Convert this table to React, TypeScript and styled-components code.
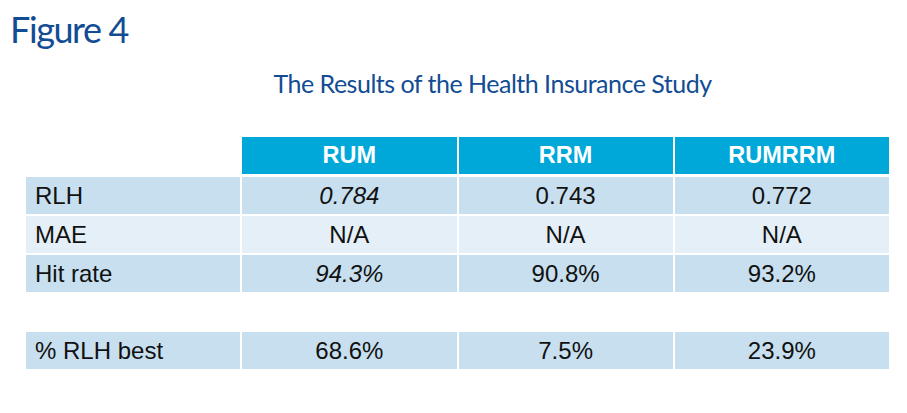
import React from "react";
import styled, { createGlobalStyle } from "styled-components";

const GlobalStyle = createGlobalStyle`
  html, body {
    margin: 0;
    padding: 0;
    background: #ffffff;
  }
`;

const Page = styled.div`
  width: 907px;
  height: 413px;
  background: #ffffff;
  overflow: hidden;
`;

const FigureTitle = styled.h1`
  margin: 0;
  padding: 7px 0 0 10px;
  font-family: Lato, "Open Sans", sans-serif;
  font-weight: 400;
  font-size: 36px;
  line-height: 44px;
  letter-spacing: -1.4px;
  color: #124c94;
`;

const Subtitle = styled.h2`
  margin: 0;
  width: 863px;
  margin-left: 26px;
  padding: 17px 0 0 70px;
  box-sizing: border-box;
  text-align: center;
  font-family: Lato, "Open Sans", sans-serif;
  font-weight: 400;
  font-size: 25px;
  line-height: 30px;
  letter-spacing: -0.5px;
  color: #124c94;
`;

const Table = styled.div`
  width: 863px;
  margin: 39px 0 0 26px;
  display: grid;
  grid-template-columns: repeat(4, 1fr);
  column-gap: 2px;
  row-gap: 2px;
  font-family: "Liberation Sans", Arial, sans-serif;
  font-size: 24px;
`;

const HeadCell = styled.div<{ $blank?: boolean }>`
  height: 37px;
  margin-bottom: 1px;
  display: flex;
  align-items: center;
  justify-content: center;
  background: ${(p) => (p.$blank ? "transparent" : "#00a8da")};
  color: #ffffff;
  font-weight: 700;
  font-size: 23.5px;
`;

const Cell = styled.div<{ $shade: "dark" | "light"; $label?: boolean; $italic?: boolean }>`
  height: 37px;
  display: flex;
  align-items: center;
  justify-content: ${(p) => (p.$label ? "flex-start" : "center")};
  padding-left: ${(p) => (p.$label ? "9px" : "0")};
  background: ${(p) => (p.$shade === "dark" ? "#c7dfef" : "#e4eff7")};
  color: #111111;
  font-style: ${(p) => (p.$italic ? "italic" : "normal")};
`;

const Spacer = styled.div`
  grid-column: 1 / -1;
  height: 36px;
`;

type Row = {
  label: string;
  values: string[];
  italic?: number[];
  shade: "dark" | "light";
};

const rows: Row[] = [
  { label: "RLH", values: ["0.784", "0.743", "0.772"], italic: [0], shade: "dark" },
  { label: "MAE", values: ["N/A", "N/A", "N/A"], shade: "light" },
  { label: "Hit rate", values: ["94.3%", "90.8%", "93.2%"], italic: [0], shade: "dark" },
];

const bestRow: Row = {
  label: "% RLH best",
  values: ["68.6%", "7.5%", "23.9%"],
  shade: "dark",
};

const columns = ["RUM", "RRM", "RUMRRM"];

function renderRow(row: Row) {
  return (
    <React.Fragment key={row.label}>
      <Cell $shade={row.shade} $label>
        {row.label}
      </Cell>
      {row.values.map((v, i) => (
        <Cell key={i} $shade={row.shade} $italic={row.italic?.includes(i)}>
          {v}
        </Cell>
      ))}
    </React.Fragment>
  );
}

export default function App() {
  return (
    <Page>
      <GlobalStyle />
      <FigureTitle>Figure 4</FigureTitle>
      <Subtitle>The Results of the Health Insurance Study</Subtitle>
      <Table>
        <HeadCell $blank />
        {columns.map((c) => (
          <HeadCell key={c}>{c}</HeadCell>
        ))}
        {rows.map(renderRow)}
        <Spacer />
        {renderRow(bestRow)}
      </Table>
    </Page>
  );
}
